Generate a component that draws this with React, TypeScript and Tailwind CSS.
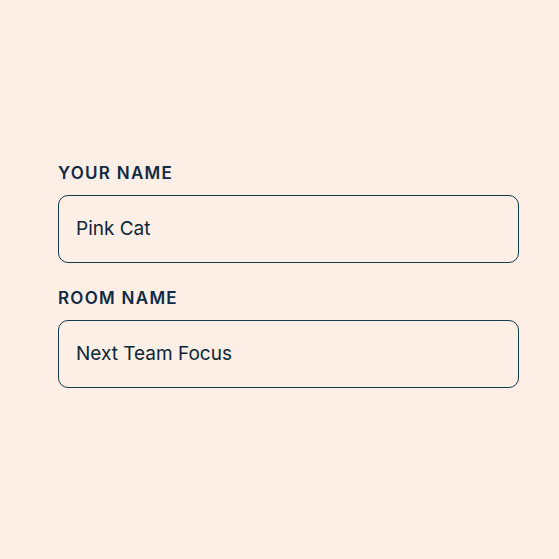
import React from "react";

type FieldProps = {
  label: string,
  value: string
}

const Field: React.FC<FieldProps> = ({label, value}) => {
  return (
    <div className="flex flex-col">
      <label className="text-[17px] leading-6 font-semibold tracking-[0.075em] text-[#0f2a44]">{label}</label>
      <div className="mt-[10px] h-[68px] w-[461px] rounded-[10px] border border-[#0f3b4a] flex items-center px-[17px]">
        <span className="text-[19px] text-[#0c2636]">{value}</span>
      </div>
    </div>
  );
};

const App: React.FC = () => {
  return (
    <div className="w-[559px] h-[559px] bg-[#fdeee6] pt-[161px] pl-[58px] font-['Inter',sans-serif]">
      <div className="flex flex-col gap-[23px]">
        <Field label="YOUR NAME" value="Pink Cat" />
        <Field label="ROOM NAME" value="Next Team Focus" />
      </div>
    </div>
  );
};

export default App;
